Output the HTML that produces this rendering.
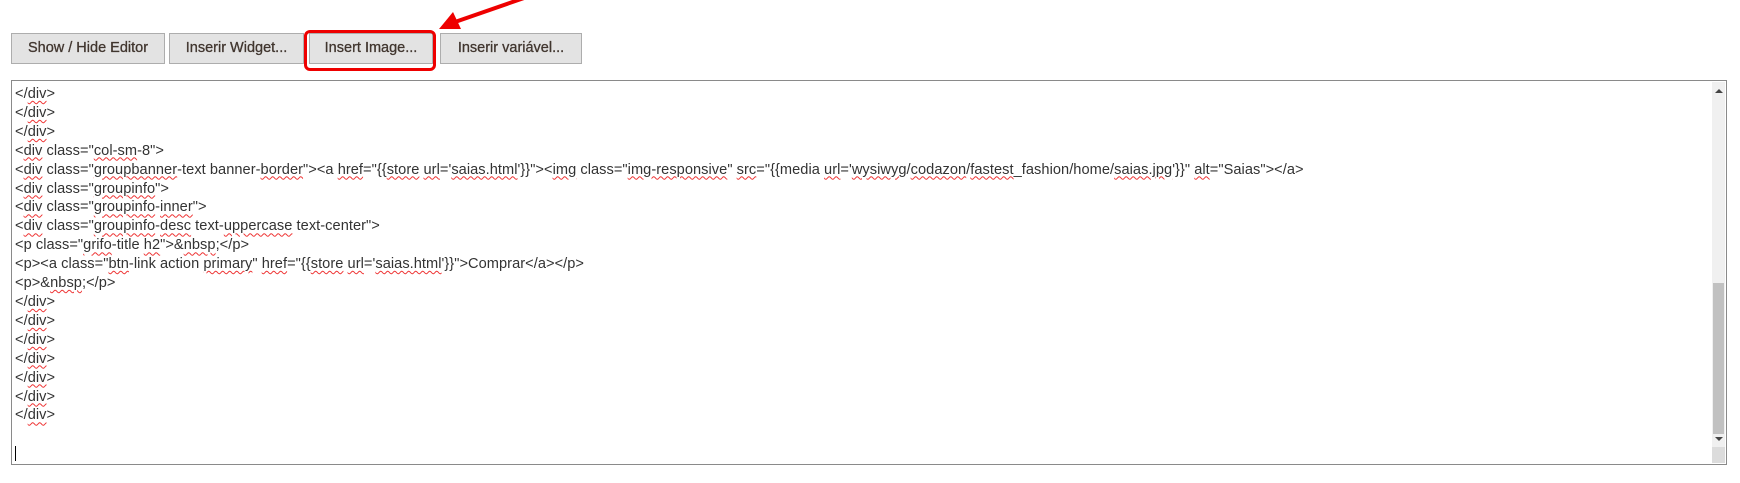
<!DOCTYPE html>
<html><head><meta charset="utf-8"><style>
body{margin:0;width:1740px;height:483px;background:#fff;position:relative;overflow:hidden;font-family:"Liberation Sans",sans-serif;}
.b{position:absolute;top:33px;height:31px;background:#e3e3e3;border:1px solid #adadad;box-sizing:border-box;color:#41362f;font-size:14.5px;font-weight:normal;text-align:center;line-height:29px;-webkit-text-stroke:0.3px #41362f;}
.ta{position:absolute;left:11px;top:80px;width:1716px;height:385px;border:1px solid #8a8a8a;box-sizing:border-box;}
.txt{position:absolute;left:3px;top:4px;font-size:14.6px;line-height:18.9px;color:#333;white-space:pre;letter-spacing:0.05px;}
u{text-decoration:underline wavy #e33;text-decoration-thickness:1px;text-underline-offset:2px;}
.sb{position:absolute;right:1px;top:1px;width:13px;bottom:17px;background:#f0f0f0;}
.th{position:absolute;left:1px;width:11px;top:201px;height:151px;background:#c1c1c1;}
</style></head><body>
<div class="b" style="left:11px;width:154px">Show / Hide Editor</div>
<div class="b" style="left:169px;width:135px">Inserir Widget...</div>
<div class="b" style="left:309px;width:124px">Insert Image...</div>
<div class="b" style="left:440px;width:142px">Inserir variável...</div>
<div style="position:absolute;left:304px;top:30px;width:132px;height:41px;border:3px solid #e00;border-radius:6px;box-sizing:border-box"></div>
<svg style="position:absolute;left:0;top:0" width="1740" height="483"><line x1="524" y1="-2" x2="455" y2="22" stroke="#e00" stroke-width="4"/><polygon points="439,29 453,12 461,29" fill="#e00"/></svg>
<div class="ta"><div class="txt">&lt;/<u>div</u>&gt;
&lt;/<u>div</u>&gt;
&lt;/<u>div</u>&gt;
&lt;<u>div</u> class="<u>col-sm</u>-8"&gt;
&lt;<u>div</u> class="<u>groupbanner</u>-text banner-<u>border</u>"&gt;&lt;a <u>href</u>="{{<u>store</u> <u>url</u>='<u>saias.html</u>'}}"&gt;&lt;<u>img</u> class="<u>img-responsive</u>" <u>src</u>="{{media <u>url</u>='<u>wysiwyg</u>/<u>codazon</u>/<u>fastest</u>_fashion/home/<u>saias.jpg</u>'}}" <u>alt</u>="Saias"&gt;&lt;/a&gt;
&lt;<u>div</u> class="<u>groupinfo</u>"&gt;
&lt;<u>div</u> class="<u>groupinfo</u>-<u>inner</u>"&gt;
&lt;<u>div</u> class="<u>groupinfo</u>-<u>desc</u> text-<u>uppercase</u> text-center"&gt;
&lt;p class="<u>grifo</u>-title <u>h2</u>"&gt;&amp;<u>nbsp</u>;&lt;/p&gt;
&lt;p&gt;&lt;a class="<u>btn</u>-link action <u>primary</u>" <u>href</u>="{{<u>store</u> <u>url</u>='<u>saias.html</u>'}}"&gt;Comprar&lt;/a&gt;&lt;/p&gt;
&lt;p&gt;&amp;<u>nbsp</u>;&lt;/p&gt;
&lt;/<u>div</u>&gt;
&lt;/<u>div</u>&gt;
&lt;/<u>div</u>&gt;
&lt;/<u>div</u>&gt;
&lt;/<u>div</u>&gt;
&lt;/<u>div</u>&gt;
&lt;/<u>div</u>&gt;</div>
<div style="position:absolute;left:3px;top:365px;width:1px;height:15px;background:#000"></div>
<div class="sb"><div class="th"></div>
<div style="position:absolute;left:3px;top:7px;border:4px solid transparent;border-bottom:4px solid #444;border-top:0"></div>
<div style="position:absolute;left:3px;bottom:6px;border:4px solid transparent;border-top:4px solid #444;border-bottom:0"></div></div>
<div style="position:absolute;right:1px;bottom:1px;width:13px;height:16px;background:#dcdcdc"></div>
</div>
</body></html>
